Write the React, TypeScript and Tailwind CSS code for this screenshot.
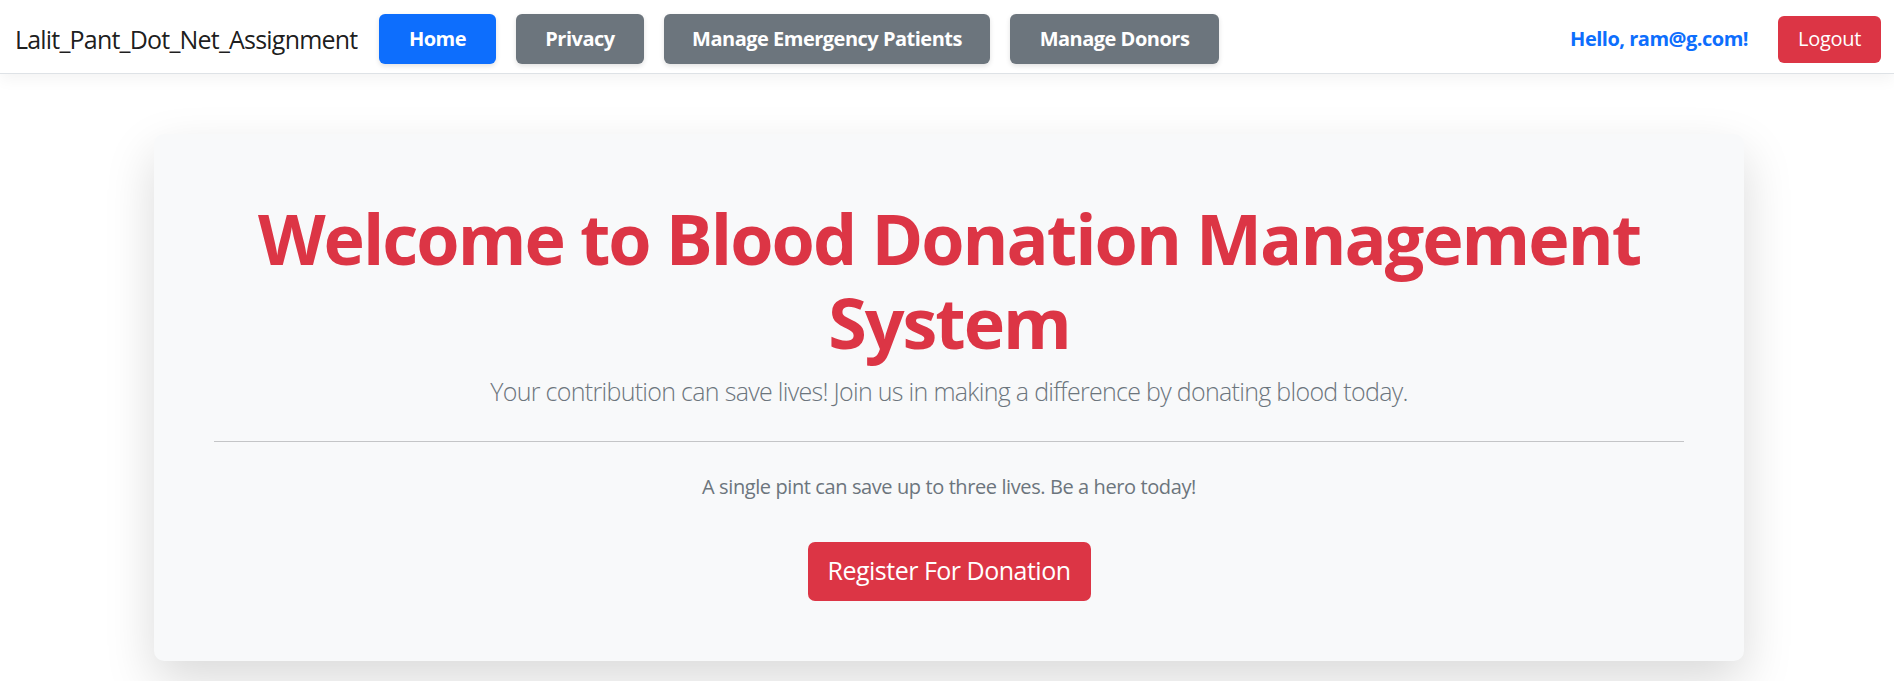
import React from 'react'

const navLinks = [
  { label: 'Home', width: 'w-[117px]', active: true },
  { label: 'Privacy', width: 'w-[128px]', active: false },
  { label: 'Manage Emergency Patients', width: 'w-[326px]', active: false },
  { label: 'Manage Donors', width: 'w-[209px]', active: false },
]

function Navbar() {
  return (
    <header className="h-[74px] bg-white border-b border-[#dee2e6] shadow-[0_5px_15px_rgba(0,0,0,0.05)]">
      <nav className="h-full flex items-center pt-[5px] pl-[15px] pr-[13px]">
        <a className="w-[344px] mr-[20px] text-[25px] text-[#000000e6] tracking-[-0.8px] leading-none whitespace-nowrap">
          Lalit_Pant_Dot_Net_Assignment
        </a>
        <ul className="flex items-center gap-[20px]">
          {navLinks.map((link) => (
            <li key={link.label}>
              <a
                className={
                  (link.active ? 'bg-[#0d6efd] ' : 'bg-[#6c757d] ') +
                  link.width +
                  ' h-[50px] flex items-center justify-center rounded-[6px] text-white text-[20px] font-bold tracking-[-0.5px] shadow-[0_2px_5px_rgba(0,0,0,0.12)]'
                }
              >
                {link.label}
              </a>
            </li>
          ))}
        </ul>
        <div className="ml-auto flex items-center gap-[30px]">
          <span className="text-[#0d6efd] font-bold text-[20px] tracking-[-0.5px]">Hello, ram@g.com!</span>
          <button className="w-[103px] h-[47px] rounded-[6px] bg-[#dc3545] text-white text-[20px] tracking-[-0.3px]">
            Logout
          </button>
        </div>
      </nav>
    </header>
  )
}

export default function App() {
  return (
    <div className="min-h-[681px] bg-white text-[#212529] font-['Open_Sans','Noto_Sans',sans-serif]">
      <Navbar />
      <main className="pt-[60px]">
        <section className="ml-[154px] w-[1590px] rounded-[10px] bg-[#f8f9fa] shadow-[0_20px_50px_rgba(0,0,0,0.15)] px-[60px] pt-[62px] pb-[60px] text-center">
          <h1 className="text-[70px] leading-[84px] font-bold text-[#dc3545] tracking-[-2px]">
            Welcome to Blood Donation Management System
          </h1>
          <p className="mt-[9px] text-[25px] leading-[37.5px] font-light text-[#6c757d] tracking-[-0.7px]">
            Your contribution can save lives! Join us in making a difference by donating blood today.
          </p>
          <hr className="mt-[30px] mb-[30px] border-0 border-t border-[#c4c5c7]" />
          <p className="text-[20px] leading-[30px] text-[#6c757d] tracking-[-0.4px]">
            A single pint can save up to three lives. Be a hero today!
          </p>
          <div className="mt-[40px] flex justify-center">
            <button className="w-[283px] h-[59px] rounded-[7px] bg-[#dc3545] text-white text-[25px] tracking-[-0.5px]">
              Register For Donation
            </button>
          </div>
        </section>
      </main>
    </div>
  )
}
